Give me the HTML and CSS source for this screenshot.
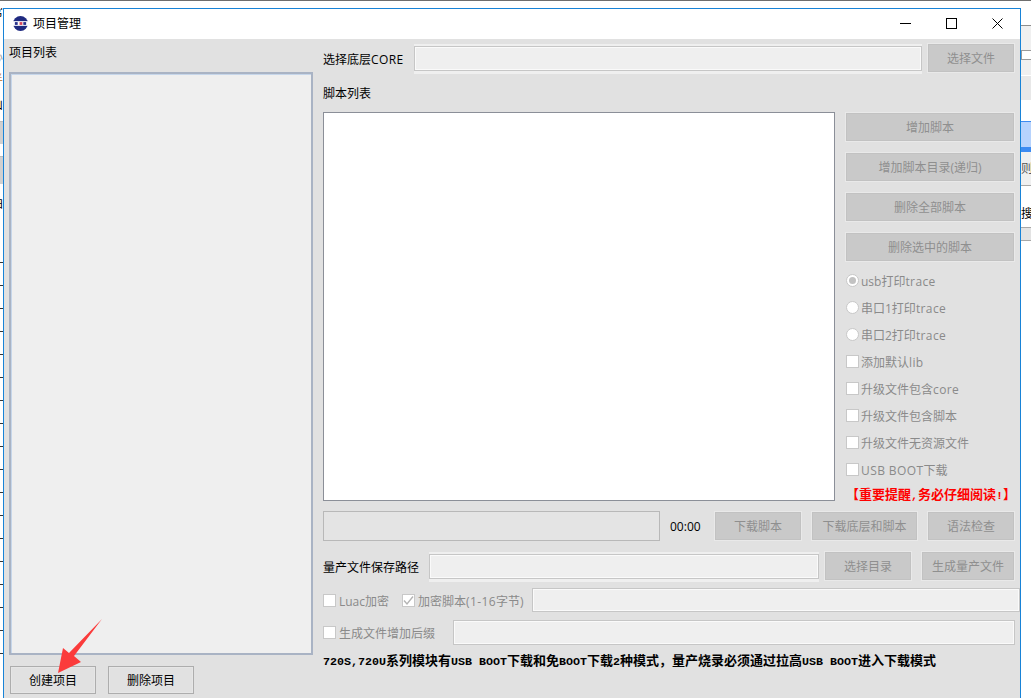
FILE: index.html
```html
<!DOCTYPE html>
<html lang="zh-CN">
<head>
    <meta charset="UTF-8">
    <title>项目管理</title>
    <link rel="stylesheet" href="styles.css">
</head>
<body>
    <!-- what is left of the main window behind the dialog -->
    <div class="behind-top"></div>
    <div class="behind-left">
        <div class="bl-a">
            <div class="frag f1">常</div>
            <div class="frag f2">心</div>
            <div class="frag f3">半</div>
            <div class="frag f4">山</div>
        </div>
        <div class="bl-b"></div>
        <div class="bl-c"></div>
        <div class="bl-d">拍</div>
        <div class="bl-ticks">
            <i></i><i></i><i></i><i></i><i></i><i></i><i></i><i></i><i></i><i></i><i></i><i></i><i></i><i></i><i></i><i></i><i></i><i></i>
        </div>
    </div>
    <div class="behind-right">
        <div class="br-head"></div>
        <div class="br-check"><span></span></div>
        <div class="br-gap"></div>
        <div class="br-blue"></div>
        <div class="br-row">则</div>
        <div class="br-row br-dark">搜</div>
        <div class="br-last"></div>
    </div>

    <div class="window">
        <div class="titlebar">
            <svg class="logo" width="15" height="15" viewBox="0 0 16 16">
                <circle cx="8" cy="8" r="8" fill="#1f2a80"/>
                <rect x="0" y="5.5" width="16" height="5" fill="#fff"/>
                <rect x="2" y="6.5" width="3" height="3" fill="#27308a"/>
                <rect x="7" y="6.5" width="3" height="3" fill="#d8455a"/>
                <rect x="11" y="6.5" width="3" height="3" fill="#27308a"/>
            </svg>
            <span class="title">项目管理</span>
            <div class="winbtns">
                <div class="winbtn"><svg width="11" height="11" viewBox="0 0 11 11"><path d="M0 5.5H11" stroke="#000"/></svg></div>
                <div class="winbtn"><svg width="11" height="11" viewBox="0 0 11 11"><rect x="0.5" y="0.5" width="10" height="10" fill="none" stroke="#000"/></svg></div>
                <div class="winbtn"><svg width="11" height="11" viewBox="0 0 11 11"><path d="M0.5 0.5L10.5 10.5M10.5 0.5L0.5 10.5" stroke="#000"/></svg></div>
            </div>
        </div>

        <div class="content">
            <div class="left">
                <div class="left-title">项目列表</div>
                <div class="project-list"></div>
                <div class="left-btns">
                    <button class="btn">创建项目</button>
                    <button class="btn">删除项目</button>
                </div>
            </div>

            <div class="right">
                <div class="row row-core">
                    <span class="lbl">选择底层<span class="en">CORE</span></span>
                    <input class="field band grow" disabled>
                    <button class="btn off w86" disabled>选择文件</button>
                </div>
                <div class="lbl script-title">脚本列表</div>

                <div class="main">
                    <div class="script-list"></div>
                    <div class="side">
                        <button class="btn off side-btn" disabled>增加脚本</button>
                        <button class="btn off side-btn" disabled>增加脚本目录(递归)</button>
                        <button class="btn off side-btn" disabled>删除全部脚本</button>
                        <button class="btn off side-btn" disabled>删除选中的脚本</button>
                        <div class="options">
                            <div class="opt"><span class="radio on"></span><span>usb打印<span class="en">trace</span></span></div>
                            <div class="opt"><span class="radio"></span><span>串口1打印<span class="en">trace</span></span></div>
                            <div class="opt"><span class="radio"></span><span>串口2打印<span class="en">trace</span></span></div>
                            <div class="opt"><span class="box"></span><span>添加默认<span class="en">lib</span></span></div>
                            <div class="opt"><span class="box"></span><span>升级文件包含<span class="en">core</span></span></div>
                            <div class="opt"><span class="box"></span>升级文件包含脚本</div>
                            <div class="opt"><span class="box"></span>升级文件无资源文件</div>
                            <div class="opt"><span class="box"></span><span><span class="en">USB BOOT</span>下载</span></div>
                        </div>
                        <div class="notice">【重要提醒<span class="latin">,</span>务必仔细阅读<span class="latin">!</span>】</div>
                    </div>
                </div>

                <div class="row row-progress">
                    <div class="progress"></div>
                    <span class="time">00:00</span>
                    <button class="btn off w86" disabled>下载脚本</button>
                    <button class="btn off w105" disabled>下载底层和脚本</button>
                    <button class="btn off w86" disabled>语法检查</button>
                </div>

                <div class="row row-path">
                    <span class="lbl path-lbl">量产文件保存路径</span>
                    <input class="field band path-field" disabled>
                    <button class="btn off w86" disabled>选择目录</button>
                    <button class="btn off w92" disabled>生成量产文件</button>
                </div>

                <div class="row row-encrypt">
                    <span class="opt"><span class="box"></span>Luac加密</span>
                    <span class="opt"><span class="box"><svg width="11" height="11" viewBox="0 0 11 11"><path d="M1 5.5L4 9L10 1.5" fill="none" stroke="#b4b4b4" stroke-width="1.4"/></svg></span><span>加密脚本<span class="en">(1-16</span>字节)</span></span>
                    <input class="field grow" disabled>
                </div>

                <div class="row row-suffix">
                    <span class="opt"><span class="box"></span>生成文件增加后缀</span>
                    <input class="field grow" disabled>
                </div>

                <div class="footnote"><span class="latin">720S,720U</span>系列模块有<span class="latin">USB BOOT</span>下载和免<span class="latin">BOOT</span>下载<span class="latin">2</span>种模式，量产烧录必须通过拉高<span class="latin">USB BOOT</span>进入下载模式</div>
            </div>
        </div>
    </div>

    <svg class="arrow" width="60" height="70" viewBox="0 0 60 70">
        <polygon points="52,9 24,46 31,52 8,63 13,38 19,43" fill="#fb3b3b"/>
    </svg>
</body>
</html>
```

FILE: styles.css
```css
* {
    box-sizing: border-box;
}
body {
    margin: 0;
    width: 1031px;
    height: 698px;
    position: relative;
    overflow: hidden;
    background: #fff;
    font-family: "Open Sans", "Noto Sans CJK SC", sans-serif;
    font-size: 12px;
    color: #000;
}

/* main window behind the dialog */
.behind-top {
    position: absolute;
    left: 0;
    top: 0;
    width: 100%;
    height: 1px;
    background: #6e6e6e;
}
.behind-left {
    position: absolute;
    left: 0;
    top: 8px;
    width: 3px;
    height: 690px;
    overflow: hidden;
    font-size: 12px;
    line-height: 16px;
    white-space: nowrap;
    direction: rtl;
}
.bl-a {
    height: 117px;
}
.frag {
    height: 16px;
}
.f1 {
    margin-top: -4px;
}
.f2 {
    margin-top: 29px;
    color: #999;
}
.f3 {
    margin-top: 7px;
    color: #c98a4a;
}
.f4 {
    margin-top: 9px;
}
.bl-b {
    height: 23px;
    background: #d0d0d0;
    border-top: 1px solid #bcbcbc;
}
.bl-c {
    height: 28px;
    margin-top: 12px;
    background: #d0d0d0;
    border-top: 1px solid #bcbcbc;
}
.bl-d {
    height: 40px;
    padding-top: 12px;
}
.bl-ticks {
    display: flex;
    flex-direction: column;
    gap: 22px;
    padding-top: 38px;
}
.bl-ticks i {
    display: block;
    height: 1px;
    width: 3px;
    background: #333;
}
.behind-right {
    position: absolute;
    left: 1021px;
    top: 25px;
    width: 10px;
    overflow: hidden;
    font-size: 12px;
    white-space: nowrap;
}
.br-head {
    height: 15px;
    background: #f0f0f0;
    border-top: 1px solid #8e8e8e;
}
.br-check {
    height: 35px;
    padding-top: 10px;
    background: #f0f0f0;
}
.br-check span {
    display: block;
    width: 12px;
    height: 10px;
    background: #fff;
    border: 1px solid #9a9a9a;
}
.br-gap {
    height: 46px;
    background: linear-gradient(#e8e8e8 0 24px, #fff 24px);
    border-top: 1px solid #fff;
}
.br-blue {
    height: 31px;
    background: #b7d3fd;
    border-top: 1px solid #3d8bf2;
    border-bottom: 5px solid #3d8bf2;
}
.br-row {
    height: 34px;
    line-height: 34px;
    background: #f0f0f0;
    border-bottom: 1px solid #a8a8a8;
    color: #555;
}
.br-dark {
    height: 42px;
    line-height: 56px;
    background: #fff;
    color: #000;
}
.br-last {
    height: 13px;
    background: #e3e3e3;
    border-bottom: 1px solid #a8a8a8;
}

/* dialog */
.window {
    position: absolute;
    left: 3px;
    top: 8px;
    width: 1018px;
    height: 690px;
    border: 1px solid #1883d7;
    border-bottom: none;
    background: #e1e1e1;
    display: flex;
    flex-direction: column;
    overflow: hidden;
}
.titlebar {
    height: 30px;
    flex: none;
    background: #fff;
    display: flex;
    align-items: center;
    padding: 0 0 2px 9px;
}
.logo {
    margin-right: 5px;
}
.title {
    flex: 1;
}
.winbtns {
    display: flex;
}
.winbtn {
    width: 46px;
    height: 28px;
    display: flex;
    align-items: center;
    justify-content: center;
}
.content {
    flex: 1;
    display: flex;
    min-height: 0;
}

/* left column */
.left {
    width: 319px;
    padding: 0 0 4px 5px;
    display: flex;
    flex-direction: column;
}
.left-title {
    height: 33px;
    line-height: 27px;
}
.project-list {
    flex: 1;
    width: 304px;
    background: #efefef;
    border: 2px solid #a9b3c4;
    box-shadow: inset 1px 1px 0 #c6d6ea;
}
.left-btns {
    display: flex;
    gap: 12px;
    margin-top: 11px;
    padding-left: 1px;
}
.left-btns .btn {
    width: 86px;
}

/* buttons and fields */
.btn {
    height: 28px;
    padding: 0;
    font: inherit;
    color: #000;
    background: #e1e1e1;
    border: 1px solid #adadad;
    box-shadow: inset 0 0 0 1px #e6e6e6;
    flex: none;
}
.btn.off {
    color: #8f8f8f;
    background: #c9c9c9;
    border-color: #c2c2c2;
    box-shadow: 0 0 0 1px #e9e9e9;
}
.w86 {
    width: 86px;
}
.w92 {
    width: 92px;
}
.w105 {
    width: 105px;
}
.field {
    display: block;
    height: 100%;
    min-width: 0;
    background: #efefef;
    border: 1px solid #c6c6c6;
    box-shadow: inset 0 0 0 1px #fafafa;
    padding: 0;
}
.band {
    box-shadow: inset 0 0 0 1px #fafafa, 0 -2px 0 #efefef, 0 3px 0 #efefef;
}
.grow {
    flex: 1;
}
.en {
    letter-spacing: 0.4px;
}

/* right column */
.right {
    flex: 1;
    min-width: 0;
    padding-top: 5px;
}
.row {
    display: flex;
    align-items: center;
}
.lbl {
    flex: none;
}
.row-core {
    height: 28px;
    margin-right: 6px;
}
.row-core .lbl {
    width: 91px;
    padding-top: 1px;
}
.row-core .field {
    height: 25px;
    margin-right: 6px;
}
.script-title {
    height: 24px;
    line-height: 24px;
    margin: 10px 0 6px;
}
.main {
    display: flex;
    height: 389px;
}
.script-list {
    width: 512px;
    height: 389px;
    background: #fff;
    border: 1px solid #8b8f98;
}
.side {
    width: 168px;
    margin-left: 11px;
    padding-top: 1px;
    display: flex;
    flex-direction: column;
    gap: 12px;
    flex: none;
}
.side-btn {
    width: 168px;
}
.options {
    margin-top: -6px;
    color: #8a8a8a;
}
.opt {
    height: 27px;
    display: flex;
    align-items: center;
    color: #8a8a8a;
    flex: none;
}
.radio,
.box {
    width: 13px;
    height: 13px;
    margin-right: 2px;
    background: #fff;
    border: 1px solid #c8c8c8;
    flex: none;
    display: flex;
    align-items: center;
    justify-content: center;
}
.radio {
    border-radius: 50%;
}
.radio.on::after {
    content: "";
    width: 7px;
    height: 7px;
    border-radius: 50%;
    background: #c2c2c2;
}
.notice {
    margin-top: -11px;
    height: 20px;
    line-height: 20px;
    font-size: 13px;
    font-weight: bold;
    color: #f00;
    text-align: center;
    white-space: nowrap;
}
.row-progress {
    height: 30px;
    margin: 10px 6px 0 0;
}
.progress {
    width: 337px;
    height: 30px;
    background: #e4e4e4;
    border: 1px solid #b8b8b8;
}
.time {
    width: 55px;
    padding-left: 10px;
    flex: none;
}
.row-progress .w105 {
    margin: 0 11px;
}
.row-path {
    height: 28px;
    margin: 11px 6px 0 0;
}
.path-lbl {
    width: 106px;
    padding-top: 1px;
}
.path-field {
    width: 390px;
    height: 25px;
    margin-right: 6px;
}
.row-path .w92 {
    margin-left: 11px;
}
.row-encrypt {
    height: 24px;
    margin-top: 8px;
}
.row-encrypt .opt:first-child {
    width: 79px;
}
.row-encrypt .opt:nth-child(2) {
    width: 130px;
}
.row-encrypt .box,
.row-suffix .box {
    margin-right: 3px;
}
.row-encrypt .opt {
    padding-top: 1px;
}
.row-suffix {
    height: 25px;
    margin: 8px 5px 0 0;
}
.row-suffix .opt {
    width: 130px;
}
.footnote {
    height: 20px;
    line-height: 20px;
    margin-top: 5px;
    font-size: 13px;
    font-weight: bold;
    white-space: pre;
}
.latin {
    font-family: "Liberation Mono", monospace;
    font-size: 11.67px;
}

.arrow {
    position: absolute;
    left: 50px;
    top: 610px;
}
```
